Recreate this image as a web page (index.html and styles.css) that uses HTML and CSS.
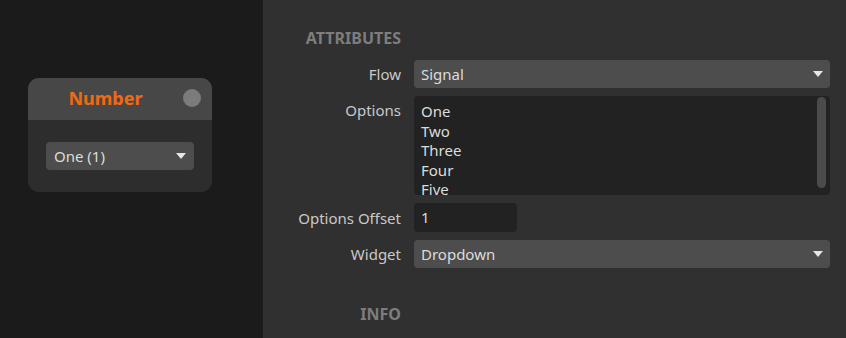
FILE: index.html
```html
<!DOCTYPE html>
<html lang="en">
<head>
  <meta charset="UTF-8">
  <title>Number Node</title>
  <link rel="stylesheet" href="styles.css">
</head>
<body>
  <div class="app">
    <div class="canvas">
      <div class="node">
        <div class="node-header">
          <span class="node-title">Number</span>
          <span class="node-port"></span>
        </div>
        <div class="node-body">
          <div class="select small">
            <span>One (1)</span>
            <span class="arrow"></span>
          </div>
        </div>
      </div>
    </div>

    <div class="inspector">
      <div class="section">ATTRIBUTES</div>
      <div></div>

      <label class="label">Flow</label>
      <div class="select">
        <span>Signal</span>
        <span class="arrow"></span>
      </div>

      <label class="label top">Options</label>
      <div class="listbox">
        <div class="list">
          <div>One</div>
          <div>Two</div>
          <div>Three</div>
          <div>Four</div>
          <div>Five</div>
        </div>
        <div class="scrollbar"></div>
      </div>

      <label class="label">Options Offset</label>
      <div class="field">1</div>

      <label class="label">Widget</label>
      <div class="select">
        <span>Dropdown</span>
        <span class="arrow"></span>
      </div>

      <div class="section info">INFO</div>
      <div></div>
    </div>
  </div>
</body>
</html>
```

FILE: styles.css
```css
* {
  margin: 0;
  padding: 0;
  box-sizing: border-box;
}

body {
  font-family: 'Noto Sans', 'Open Sans', sans-serif;
  font-size: 15px;
  color: #d4d4d4;
  background: #303030;
}

.app {
  display: flex;
  height: 338px;
  overflow: hidden;
}

/* node canvas */
.canvas {
  width: 263px;
  flex-shrink: 0;
  background: #1b1b1b;
  padding: 78px 0 0 28px;
}

.node {
  width: 184px;
  border-radius: 11px;
  background: #2d2d2d;
  overflow: hidden;
}

.node-header {
  height: 42px;
  background: #474747;
  display: flex;
  align-items: center;
  padding: 0 11px 2px 0;
}

.node-title {
  flex: 1;
  text-align: center;
  color: #f26a10;
  font-weight: 700;
  font-size: 18px;
}

.node-port {
  width: 18px;
  height: 18px;
  border-radius: 50%;
  background: #7b7b7b;
}

.node-body {
  padding: 22px 18px 22px;
}

/* inspector */
.inspector {
  flex: 1;
  display: grid;
  grid-template-columns: 138px 1fr;
  column-gap: 13px;
  row-gap: 8px;
  align-content: start;
  padding: 28px 16px 0 0;
}

.section {
  text-align: right;
  font-weight: 700;
  font-size: 16px;
  color: #7d7d7d;
  height: 24px;
  line-height: 20px;
}

.section.info {
  margin-top: 28px;
}

.label {
  text-align: right;
  align-self: center;
  color: #c9c9c9;
}

.label.top {
  align-self: start;
  padding-top: 4px;
}

.select {
  height: 28px;
  background: #4d4d4d;
  border-radius: 4px;
  display: flex;
  align-items: center;
  justify-content: space-between;
  padding: 0 7px;
  color: #dcdcdc;
}

.select.small {
  padding: 0 8px;
}

.arrow {
  width: 0;
  height: 0;
  border-left: 5px solid transparent;
  border-right: 5px solid transparent;
  border-top: 6px solid #e6e6e6;
}

.listbox {
  height: 99px;
  background: #222222;
  border-radius: 4px;
  display: flex;
  overflow: hidden;
}

.list {
  flex: 1;
  padding: 6px 7px 0;
  line-height: 19.6px;
  color: #dcdcdc;
}

.scrollbar {
  width: 9px;
  height: 91px;
  margin: 1px 4px 0 0;
  border-radius: 5px;
  background: #4b4b4b;
}

.field {
  width: 103px;
  height: 29px;
  background: #222222;
  border-radius: 4px;
  padding: 0 7px;
  line-height: 29px;
  color: #dcdcdc;
}
```
